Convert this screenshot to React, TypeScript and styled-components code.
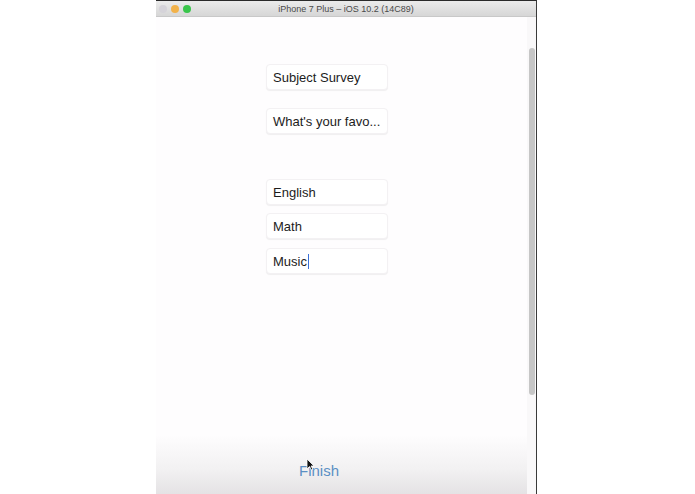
import React from 'react'
import styled, { createGlobalStyle } from 'styled-components'

const GlobalStyle = createGlobalStyle`
  html, body {
    margin: 0;
    padding: 0;
    background: #ffffff;
  }
  body {
    font-family: "Liberation Sans", Arial, sans-serif;
  }
`

const Page = styled.div`
  display: flex;
  width: 695px;
  height: 494px;
  overflow: hidden;
  background: #ffffff;
`

const Window = styled.div`
  margin-left: 156px;
  width: 381px;
  height: 494px;
  display: flex;
  flex-direction: column;
  border-right: 1px solid #3a3a3a;
  border-top: 1px solid #2a2a2a;
  box-sizing: border-box;
  position: relative;
`

const TitleBar = styled.div`
  height: 15px;
  flex: none;
  display: flex;
  align-items: center;
  padding-left: 3px;
  background: linear-gradient(#ebebeb, #d6d6d6);
  border-bottom: 1px solid #c8c8c8;
  position: relative;
`

const Lights = styled.div`
  display: flex;
  gap: 4px;
`

const Light = styled.span<{ $color: string }>`
  width: 8px;
  height: 8px;
  border-radius: 50%;
  background: ${(p) => p.$color};
`

const Title = styled.div`
  position: absolute;
  left: 0;
  right: 0;
  text-align: center;
  font-size: 9px;
  color: #4a4a4a;
`

const Body = styled.div`
  flex: 1;
  display: flex;
  background: #fdfcfd;
`

const Screen = styled.div`
  flex: 1;
  display: flex;
  flex-direction: column;
  padding: 47px 0 0 110px;
  background: linear-gradient(#fefdfe 0, #fefdfe 418px, #f2f1f2 452px, #e4e2e4 478px);
`

const Field = styled.div<{ $gap: number }>`
  width: 122px;
  height: 26px;
  box-sizing: border-box;
  margin-top: ${(p) => p.$gap}px;
  padding-left: 6px;
  display: flex;
  align-items: center;
  background: #ffffff;
  border-radius: 4px;
  border: 1px solid #f3f1f3;
  box-shadow: 0 1px 1px rgba(0, 0, 0, 0.06);
  font-size: 13px;
  color: #1c1c1c;
  white-space: nowrap;
`

const Caret = styled.span`
  display: inline-block;
  width: 1px;
  height: 15px;
  background: #3a6fd8;
  margin-left: 1px;
`

const Spacer = styled.div`
  flex: 1;
`

const FinishRow = styled.div`
  height: 32px;
  padding-left: 33px;
  display: flex;
  align-items: flex-start;
  position: relative;
`

const Finish = styled.span`
  font-size: 15px;
  color: #5b8fc4;
`

const Pointer = styled.svg`
  position: absolute;
  left: 40px;
  top: -4px;
`

const Track = styled.div`
  width: 9px;
  flex: none;
  padding-top: 31px;
  display: flex;
  justify-content: center;
  background: #f9f8f9;
`

const Thumb = styled.div`
  width: 6px;
  height: 347px;
  border-radius: 3px;
  background: #c6c6c6;
`

const FIELDS = [
  { text: 'Subject Survey', gap: 0 },
  { text: "What's your favo...", gap: 18 },
  { text: 'English', gap: 45 },
  { text: 'Math', gap: 8 },
  { text: 'Music', gap: 9, caret: true },
]

export default function App() {
  return (
    <>
      <GlobalStyle />
      <Page>
        <Window>
          <TitleBar>
            <Lights>
              <Light $color="#d5d3d9" />
              <Light $color="#f2b24a" />
              <Light $color="#39c54b" />
            </Lights>
            <Title>iPhone 7 Plus – iOS 10.2 (14C89)</Title>
          </TitleBar>
          <Body>
            <Screen>
              {FIELDS.map((f) => (
                <Field key={f.text} $gap={f.gap}>
                  {f.text}
                  {f.caret && <Caret />}
                </Field>
              ))}
              <Spacer />
              <FinishRow>
                <Finish>Finish</Finish>
                <Pointer width="9" height="13" viewBox="0 0 9 13">
                  <path d="M1 1 L1 11 L3.5 8.5 L5.5 12 L7 11.3 L5 8 L8 8 Z" fill="#111" stroke="#fff" strokeWidth="0.8" />
                </Pointer>
              </FinishRow>
            </Screen>
            <Track>
              <Thumb />
            </Track>
          </Body>
        </Window>
      </Page>
    </>
  )
}
